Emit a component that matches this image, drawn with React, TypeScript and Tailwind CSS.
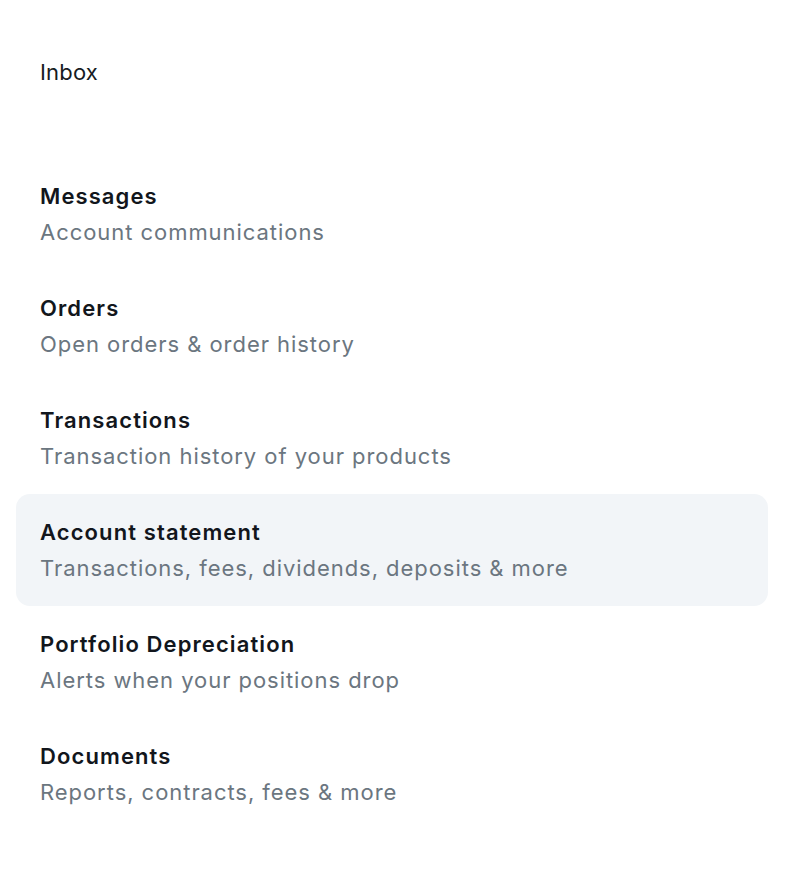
const items = [
  { title: "Messages", sub: "Account communications" },
  { title: "Orders", sub: "Open orders & order history" },
  { title: "Transactions", sub: "Transaction history of your products" },
  { title: "Account statement", sub: "Transactions, fees, dividends, deposits & more", active: true },
  { title: "Portfolio Depreciation", sub: "Alerts when your positions drop" },
  { title: "Documents", sub: "Reports, contracts, fees & more" },
]

export default function App() {
  return (
    <div className="min-h-screen bg-white pl-4 pr-[18px] pt-[54px] font-['Inter',sans-serif] antialiased">
      <h1 className="px-6 text-[22px] leading-[36px] tracking-[0.2px] text-[#161b22]">Inbox</h1>

      <ul className="mt-[68px] flex flex-col">
        {items.map(item => (
          <li
            key={item.title}
            className={
              item.active
                ? "rounded-[14px] bg-[#f2f5f8] px-6 py-5 cursor-pointer"
                : "rounded-[14px] px-6 py-5 cursor-pointer"
            }
          >
            <p className="text-[22px] leading-[36px] font-semibold tracking-[1.1px] text-[#12161c]">{item.title}</p>
            <p className="text-[22px] leading-[36px] tracking-[0.95px] text-[#6b7680]">{item.sub}</p>
          </li>
        ))}
      </ul>
    </div>
  )
}
